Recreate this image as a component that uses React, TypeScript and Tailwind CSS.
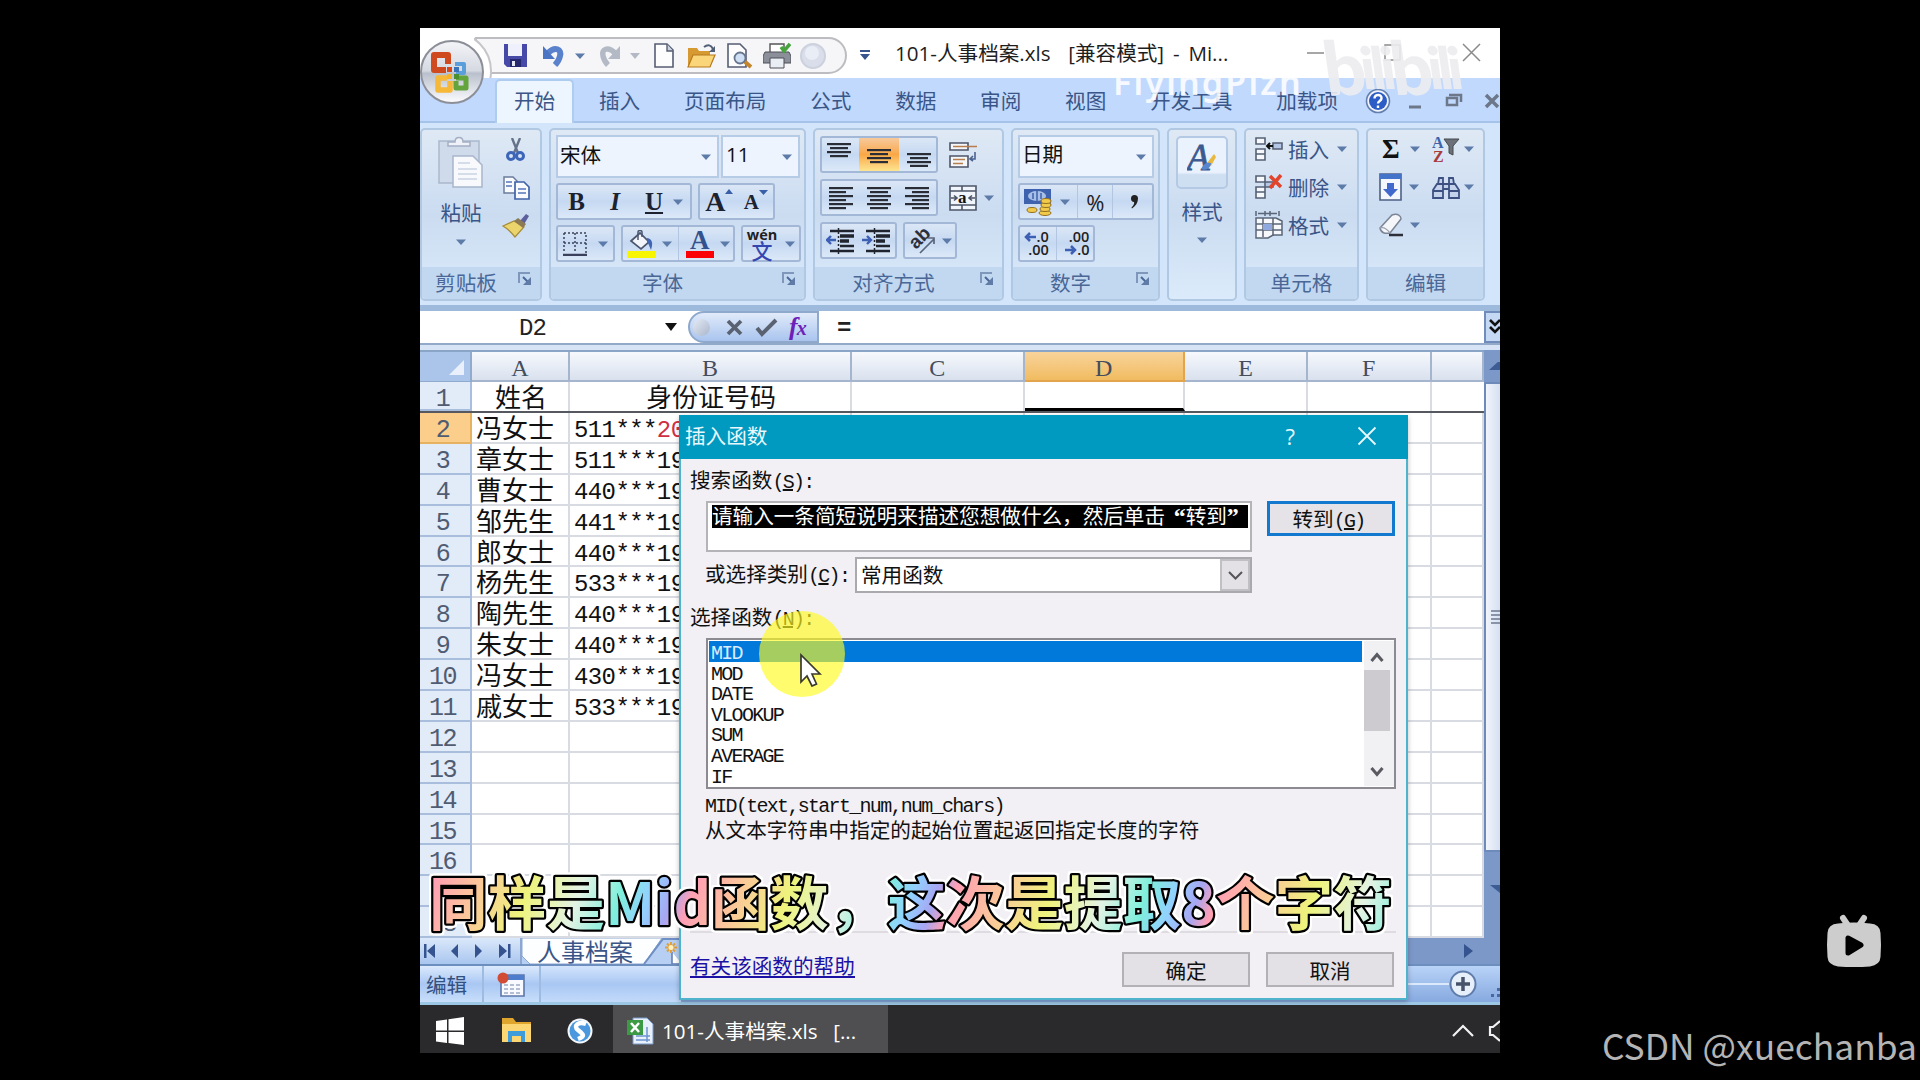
import type { ReactNode } from 'react';
import clsx from 'clsx';

const TABS = ['开始', '插入', '页面布局', '公式', '数据', '审阅', '视图', '开发工具', '加载项'];
const COLUMNS = ['A', 'B', 'C', 'D', 'E', 'F', ''];
const FUNCTIONS = ['MID', 'MOD', 'DATE', 'VLOOKUP', 'SUM', 'AVERAGE', 'IF'];

const PEOPLE = [
  { name: '冯女士', id: '511***', year: '20', red: true },
  { name: '章女士', id: '511***', year: '19' },
  { name: '曹女士', id: '440***', year: '19' },
  { name: '邹先生', id: '441***', year: '19' },
  { name: '郎女士', id: '440***', year: '19' },
  { name: '杨先生', id: '533***', year: '19' },
  { name: '陶先生', id: '440***', year: '19' },
  { name: '朱女士', id: '440***', year: '19' },
  { name: '冯女士', id: '430***', year: '19' },
  { name: '戚女士', id: '533***', year: '19' },
];

const GRID = 'grid grid-rows-[minmax(0,1fr)] grid-cols-[52px_98px_282px_172.5px_160.5px_123px_123.5px_52.5px]';
const BOX = 'flex items-center justify-around rounded-[3px] border-2 border-[#a3b8d6] bg-gradient-to-b from-[#dbe7f6] via-[#c6d9f2] to-[#dbe8f8]';

function Caret({ className }: { className?: string }) {
  return (
    <svg className={clsx('shrink-0', className)} width="10" height="6" viewBox="0 0 10 6">
      <path d="M0 0.5h10L5 6z" fill="#5d7ba8" />
    </svg>
  );
}

// Half-width latin text inside the dialog
function Mono({ children }: { children: ReactNode }) {
  return <span className="font-['Liberation_Mono',monospace] text-[20px] tracking-[-1.7px]">{children}</span>;
}

function Group({ label, launcher, className, children }: { label?: string; launcher?: boolean; className?: string; children: ReactNode }) {
  return (
    <div className={clsx('flex h-[173px] shrink-0 flex-col overflow-hidden rounded-[5px] border-2 border-[#b1c8e2] bg-gradient-to-b from-[#dfe9f5] via-[#cbdcf1] to-[#dbebfb]', className)}>
      <div className="h-[137px] shrink-0">{children}</div>
      {label && (
        <div className="flex flex-1 items-center bg-[#c2d8f1] pb-[1px] text-[20.6px] leading-none text-[#4a6796]">
          <span className={clsx('flex-1 text-center', launcher && 'pr-[8px]')}>{label}</span>
          {launcher && (
            <svg className="mr-2 -mt-2" width="14" height="14" viewBox="0 0 14 14" fill="none">
              <path d="M1 11V1h11" stroke="#7f97ba" strokeWidth="2" />
              <path d="M5 5l5 5" stroke="#4a6796" strokeWidth="2" />
              <path d="M13 5v8H5z" fill="#5f7ba6" />
            </svg>
          )}
        </div>
      )}
    </div>
  );
}

function OfficeButton() {
  return (
    <svg className="absolute left-0 top-[11px]" width="66" height="66" viewBox="0 0 66 66">
      <defs>
        <linearGradient id="orb" x1="0" y1="0" x2="0" y2="1">
          <stop offset="0" stopColor="#f4f5f8" />
          <stop offset="0.48" stopColor="#d5d9e1" />
          <stop offset="0.52" stopColor="#b9c0cd" />
          <stop offset="1" stopColor="#fdfdff" />
        </linearGradient>
      </defs>
      <circle cx="32" cy="33" r="31" fill="url(#orb)" stroke="#8c8f98" strokeWidth="2" />
      <g fill="none" strokeWidth="6" strokeLinejoin="round">
        <path d="M26 31H14V16h14v9" stroke="#cf4a1e" />
        <path d="M35 25h9v9h-8" stroke="#5a9fdb" strokeWidth="4" />
        <path d="M27 39H18v12h12v-9" stroke="#f5b838" strokeWidth="5.5" />
        <path d="M36 39h10v10H36v-7" stroke="#63a43c" strokeWidth="5" />
      </g>
      <path d="M27 28h5v5h-5z" fill="#d5491a" />
      <path d="M34 28h5v5h-5z" fill="#3b73b8" />
      <path d="M27 35h5v5h-5z" fill="#f4b426" />
      <path d="M34 35h5v5h-5z" fill="#4b8f30" />
    </svg>
  );
}

function TitleBar() {
  return (
    <div className="relative flex h-[50px] shrink-0 overflow-hidden bg-white">
      <div className="mt-[9px] ml-[55px] flex h-[37px] w-[372px] shrink-0 items-center rounded-r-full border-2 border-[#bdbdc1] bg-[#f6f6f8] pl-[26px]">
        <svg width="25" height="25" viewBox="0 0 25 25">
          <path d="M1 1h23v23H4l-3-3z" fill="#4649a8" />
          <path d="M5 1h14v12H5z" fill="#eef1fb" />
          <path d="M7 16h11v8H7z" fill="#25286f" />
          <path d="M9 18h3v5H9z" fill="#e6e8f5" />
        </svg>
        <svg className="ml-[15px]" width="22" height="24" viewBox="0 0 22 24" fill="none">
          <path d="M5 9C12 2 19 5 17 12c-1 5-3 7-5 9" stroke="#5a82cc" strokeWidth="6" />
          <path d="M0 2v13h12z" fill="#4b75c4" />
        </svg>
        <Caret className="ml-[10px]" />
        <svg className="ml-[13px]" width="22" height="24" viewBox="0 0 22 24" fill="none">
          <path d="M17 9C10 2 3 5 5 12c1 5 3 7 5 9" stroke="#b4bac5" strokeWidth="5.500" />
          <path d="M22 2v13H10z" fill="#b4bac5" />
        </svg>
        <svg className="ml-[10px] shrink-0" width="10" height="6"><path d="M0 0h10L5 6z" fill="#b4bac5" /></svg>
        <svg className="ml-[14px]" width="20" height="25" viewBox="0 0 20 25">
          <path d="M1 1h12l6 6v17H1z" fill="#fdfdfe" stroke="#555e73" strokeWidth="1.6" />
          <path d="M13 1v7h6" fill="#cdd3df" stroke="#555e73" strokeWidth="1.4" />
        </svg>
        <svg className="ml-[13px]" width="29" height="25" viewBox="0 0 29 25">
          <path d="M1 5h9l2 3h11v16H1z" fill="#d79a33" />
          <path d="M6 12h22l-5 12H1z" fill="#fbd579" stroke="#b67a1e" strokeWidth="1.2" />
          <path d="M17 4c4-3 7-2 9 2" fill="none" stroke="#535f76" strokeWidth="2" />
          <path d="M28 3v6h-6z" fill="#535f76" />
        </svg>
        <svg className="ml-[11px]" width="26" height="26" viewBox="0 0 26 26">
          <path d="M1 1h12l6 6v17H1z" fill="#fdfdfe" stroke="#555e73" strokeWidth="1.6" />
          <path d="M17 18l7 6" stroke="#c6862c" strokeWidth="4" />
          <circle cx="13" cy="15" r="5.5" fill="#cfe0f4" stroke="#68758f" strokeWidth="1.8" />
        </svg>
        <svg className="ml-[10px]" width="28" height="27" viewBox="0 0 28 27">
          <path d="M7 2h14v9H7z" fill="#fff" stroke="#555" strokeWidth="1.4" />
          <path d="M2 10h24l2 4v7H0v-7z" fill="#8b8f99" stroke="#4c4f57" />
          <path d="M7 16h14v10H7z" fill="#e9edf4" stroke="#4c4f57" />
          <path d="M18 5l3 4 6-7" fill="none" stroke="#46a53b" strokeWidth="3.5" />
        </svg>
        <svg className="ml-[9px]" width="26" height="26" viewBox="0 0 26 26">
          <circle cx="13" cy="13" r="12" fill="#d9deea" stroke="#ccd1dd" strokeWidth="2" />
          <circle cx="12" cy="10" r="7" fill="#e9edf5" />
        </svg>
      </div>
      <div className="absolute top-[3px] -left-[8px] size-[80px] rounded-full border-2 border-[#c6c6ca] bg-white" />
      <div className="absolute top-0 left-0 h-[50px] w-[54px] bg-white" />
      <svg className="mt-[21px] ml-[13px] shrink-0" width="10" height="12" viewBox="0 0 10 12">
        <path d="M0 1h10v2H0zM0 5h10L5 11z" fill="#38548f" />
      </svg>
      <div className="ml-[25px] flex h-[50px] items-center whitespace-pre font-['Open_Sans','Noto_Sans_CJK_SC',sans-serif] text-[20.6px] text-[#1e1e1e] [word-spacing:3.5px]">
        101-人事档案.xls  [兼容模式] - Mi...
      </div>
      <svg className="absolute top-[15px] right-[18px]" width="176" height="20" viewBox="0 0 176 20" fill="none" stroke="#8a8a8a" strokeWidth="1.5">
        <path d="M1 10h17M79 2h15v15H79zM157 1l17 17M174 1l-17 17" />
      </svg>
    </div>
  );
}

function TabStrip() {
  return (
    <div className="flex h-[45px] shrink-0 items-center border-b-2 border-[#a5c2e9] bg-[#c0d9fd] pt-[2px] pl-[94px] text-[20.6px] text-[#3a5587]">
      <div className="flex gap-[43.8px]">
        {TABS.map((tab, i) => (
          <span key={tab} className={clsx('whitespace-nowrap', i === 0 && 'relative -mx-[19px] -mt-[6px] -mb-[7px] rounded-t-[5px] border-2 border-b-0 border-[#aecbf0] bg-[#edf5fe] px-[17px] pt-[4px] pb-[8px]')}>{tab}</span>
        ))}
      </div>
      <svg className="ml-[27px] shrink-0" width="26" height="26" viewBox="0 0 26 26">
        <circle cx="13" cy="13" r="11.5" fill="#f0f4fc" stroke="#647fae" strokeWidth="1.6" />
        <circle cx="13" cy="13" r="9" fill="#2c5cc5" />
        <path d="M9.5 10.5c0-5 7.500-4.500 7 0c-.3 2.500-3.500 2.500-3.500 5M13 17.500v2.500" fill="none" stroke="#fff" strokeWidth="2.400" />
      </svg>
      <svg className="ml-[18px] shrink-0" width="92" height="18" viewBox="0 0 92 18" fill="none" stroke="#6c7789" strokeWidth="3">
        <path d="M0 15h12" />
        <path d="M38 6h10v7H38zM40 3h12v7" strokeWidth="2.500" />
        <path d="M77 3l12 12M89 3L77 15" strokeWidth="3.500" />
      </svg>
    </div>
  );
}

function Lines({ rows }: { rows: [number, number, number][] }) {
  return (
    <svg width="26" height="24" viewBox="0 0 26 24">
      {rows.map(([x, y, w]) => <rect key={y} x={x} y={y} width={w} height="2.2" fill="#2a2d36" />)}
    </svg>
  );
}

function ClipboardGroup() {
  return (
    <Group label="剪贴板" launcher className="w-[122px]">
      <div className="flex h-full">
        <div className="flex w-[78px] flex-col items-center pt-[6px]">
          <svg width="46" height="52" viewBox="0 0 46 52">
            <path d="M1 5h40v42H1z" fill="#cfdaea" stroke="#abb8cd" strokeWidth="1.5" />
            <path d="M10 10V6h7c0-6 8-6 8 0h7v4z" fill="#eef2f8" stroke="#a4afc3" strokeWidth="1.5" />
            <path d="M15 20h20l9 9v22H15z" fill="#f7f9fc" stroke="#a8b5cb" strokeWidth="1.5" />
            <path d="M20 27h12M20 33h19M20 38h19M20 43h19" stroke="#cbd4e4" strokeWidth="1.5" />
          </svg>
          <span className="mt-[14px] text-[20.6px] leading-none text-[#3a5587]">粘贴</span>
          <Caret className="mt-[16px]" />
        </div>
        <div className="flex flex-col items-center pt-[8px] pl-[2px]">
          <svg width="20" height="24" viewBox="0 0 20 24" fill="none">
            <path d="M6 0l6 15M14 0L8 15" stroke="#66728a" strokeWidth="2.400" />
            <circle cx="5" cy="18" r="3.500" stroke="#3d66b8" strokeWidth="3" />
            <circle cx="14" cy="18" r="3.500" stroke="#3d66b8" strokeWidth="3" />
          </svg>
          <svg className="mt-[14px]" width="27" height="24" viewBox="0 0 27 24">
            <path d="M1 1h9l4 4v12H1z" fill="#f8fafe" stroke="#6b7c9c" strokeWidth="1.5" />
            <path d="M12 6h9l5 5v12H12z" fill="#f8fafe" stroke="#3f62a8" strokeWidth="1.7" />
            <path d="M3 6h6M3 10h6M15 13h8M15 17h8" stroke="#5477bb" strokeWidth="1.5" />
          </svg>
          <svg className="mt-[13px]" width="28" height="25" viewBox="0 0 28 25">
            <path d="M17 9l7-8 3 2-6 10z" fill="#5c5f9c" />
            <path d="M1 13l11-5 10 6-9 10c-3-4-7-8-12-11z" fill="#ecd46c" stroke="#a68d3c" strokeWidth="1.3" />
            <path d="M12 8l4-3 8 6-3 4z" fill="#8c7a55" />
          </svg>
        </div>
      </div>
    </Group>
  );
}

function FontGroup() {
  return (
    <Group label="字体" launcher className="w-[257px]">
      <div className="flex flex-col pl-[5px] pt-[5px]">
        <div className="flex gap-[2px]">
          <div className="flex h-[43px] w-[163px] items-center justify-between border-2 border-[#b6cbe6] bg-[#edf4fd] pr-[6px] pb-[4px] pl-[2px] text-[20.6px] text-[#111]">
            宋体<Caret className="mt-[4px]" />
          </div>
          <div className="flex h-[43px] w-[79px] items-center justify-between border-2 border-[#b6cbe6] bg-[#edf4fd] pr-[6px] pb-[4px] pl-[3px] font-['Open_Sans',sans-serif] text-[20.6px] text-[#111]">
            11<Caret className="mt-[4px]" />
          </div>
        </div>
        <div className="mt-[5px] flex gap-[6px] font-['Liberation_Serif',serif] font-bold text-[#1c2230]">
          <div className={clsx(BOX, 'h-[37px] w-[136px] text-[25px] leading-[30px]')}>
            <div className="grid grid-cols-[37px_40px_38px_17px] items-center text-center">
              <span>B</span><span className="italic">I</span><span className="underline underline-offset-2">U</span><Caret />
            </div>
          </div>
          <div className={clsx(BOX, 'h-[37px] w-[77px]')}>
            <span className="flex text-[28px] leading-[32px]">A<svg className="mt-[3px]" width="8" height="5"><path d="M0 5h8L4 0z" fill="#3a5fa8" /></svg></span>
            <span className="flex items-start text-[21px] leading-[32px]">A<svg className="mt-[4px]" width="9" height="5"><path d="M0 0h9L4.500 5z" fill="#3a5fa8" /></svg></span>
          </div>
        </div>
        <div className="mt-[5px] flex gap-[6px]">
          <div className={clsx(BOX, 'h-[37px] w-[59px]')}>
            <svg width="24" height="24" viewBox="0 0 24 24" fill="none" stroke="#39425a">
              <path d="M1 1h22v20M1 1v20M12 1v20M1 11h22" strokeWidth="1.5" strokeDasharray="2 2" />
              <path d="M0 23h24" strokeWidth="2.500" />
            </svg>
            <Caret />
          </div>
          <div className={clsx(BOX, 'h-[37px] w-[114px]')}>
            <svg width="30" height="28" viewBox="0 0 30 28">
              <path d="M5 11l9-8 9 9-8 7z" fill="#f2f5fa" stroke="#4b5670" strokeWidth="1.7" />
              <path d="M12 10V2c0-2 4-2 4 0v5" fill="none" stroke="#4b5670" strokeWidth="1.5" />
              <path d="M21 8c6 1 6 6 4 12-2-4-2-6-4-8z" fill="#4166b6" />
              <path d="M1 21h29v7H1z" fill="#f8f500" />
            </svg>
            <Caret />
            <span className="h-full w-px bg-[#b2c6e2]" />
            <span className="flex flex-col items-center font-['Liberation_Serif',serif] text-[27px] leading-[21px] font-bold text-[#34528e]">A<i className="h-[7px] w-[28px] bg-[#fb0007]" /></span>
            <Caret />
          </div>
          <div className={clsx(BOX, 'h-[37px] w-[60px]')}>
            <span className="flex flex-col items-center">
              <span className="font-['Open_Sans',sans-serif] text-[14.5px] leading-[13px] font-bold text-[#222]">wén</span>
              <span className="text-[21px] leading-[19px] font-medium text-[#3546b0]">文</span>
            </span>
            <Caret />
          </div>
        </div>
      </div>
    </Group>
  );
}

function AlignGroup() {
  return (
    <Group label="对齐方式" launcher className="w-[191px]">
      <div className="flex flex-col gap-[6px] pl-[5px] pt-[6px]">
        <div className="flex items-center gap-[11px]">
          <div className={clsx(BOX, 'h-[37px] w-[118px]')}>
            <Lines rows={[[1, 0, 24], [4, 4, 18], [1, 8, 24], [4, 12, 18]]} />
            <div className="flex h-full w-[40px] items-center justify-center bg-gradient-to-b from-[#f7c99a] via-[#f9a845] to-[#fde590]">
              <Lines rows={[[1, 6, 24], [4, 10, 18], [1, 14, 24], [4, 18, 18]]} />
            </div>
            <Lines rows={[[1, 10, 24], [4, 14, 18], [1, 18, 24], [4, 21.8, 18]]} />
          </div>
          <svg width="28" height="28" viewBox="0 0 28 28" fill="none" stroke="#4c5568" strokeWidth="1.6">
            <path d="M1 2h18v7H1zM1 15h18v11H1z" fill="#f5f7fb" />
            <path d="M4 5.500h24M4 18.500h12M4 22.500h10" stroke="#b77d4c" />
            <path d="M26 11v7h-4M24 15l-3 3 3 2" stroke="#4a6390" />
          </svg>
        </div>
        <div className="flex items-center gap-[11px]">
          <div className={clsx(BOX, 'h-[37px] w-[118px]')}>
            <Lines rows={[[1, 1, 24], [1, 5, 17], [1, 9, 24], [1, 13, 17], [1, 17, 24], [1, 21, 17]]} />
            <Lines rows={[[1, 1, 24], [4, 5, 18], [1, 9, 24], [4, 13, 18], [1, 17, 24], [4, 21, 18]]} />
            <Lines rows={[[1, 1, 24], [8, 5, 17], [1, 9, 24], [8, 13, 17], [1, 17, 24], [8, 21, 17]]} />
          </div>
          <svg width="28" height="26" viewBox="0 0 28 26" fill="none" stroke="#4c5568" strokeWidth="1.6">
            <path d="M1 1h26v24H1zM1 6h26M1 20h26M13 1v5M13 20v5" fill="#f0f4fb" />
            <path d="M2 13h5M21 13h5M5 10.500L8 13l-3 2.500M23 10.500L20 13l3 2.500" />
            <text x="9" y="18" fontSize="17" fontWeight="700" fill="#111" stroke="none" fontFamily="Liberation Serif">a</text>
          </svg>
          <Caret className="-ml-[4px]" />
        </div>
        <div className="flex gap-[6px]">
          <div className={clsx(BOX, 'h-[37px] w-[77px]')}>
            {[false, true].map(right => (
              <svg key={String(right)} width="29" height="26" viewBox="0 0 29 26" stroke="#20242e" strokeWidth="2.400">
                <path d="M4 3h24M4 23h24M14 18h14" />
                <path d="M14 8h14M14 13h9" strokeWidth="3.500" />
                <path d="M12.500 0v26" strokeDasharray="2 2" strokeWidth="1.5" />
                <path d={right ? 'M0 12h8M5 8l4 4-4 4' : 'M10 12H2M5 8l-4 4 4 4'} stroke="#3d5fb4" fill="none" />
              </svg>
            ))}
          </div>
          <div className={clsx(BOX, 'h-[37px] w-[54px]')}>
            <svg width="28" height="28" viewBox="0 0 28 28">
              <text transform="translate(8 23) rotate(-45)" fontSize="19" fontWeight="700" fill="#2c303c" fontFamily="Liberation Sans">ab</text>
              <path d="M12 26L26 12M20 11h6v6" fill="none" stroke="#5a647a" strokeWidth="1.700" />
            </svg>
            <Caret />
          </div>
        </div>
      </div>
    </Group>
  );
}

function NumberGroup() {
  return (
    <Group label="数字" launcher className="w-[149px]">
      <div className="flex flex-col pl-[5px] pt-[5px]">
        <div className="flex h-[43px] w-[136px] items-center justify-between border-2 border-[#b6cbe6] bg-[#edf4fd] pr-[6px] pb-[6px] pl-[2px] text-[20.6px] text-[#111]">
          日期<Caret className="mt-[6px]" />
        </div>
        <div className={clsx(BOX, 'mt-[5px] h-[37px] w-[136px]')}>
          <svg width="28" height="28" viewBox="0 0 28 28">
            <path d="M0 1h27v15H0z" fill="#3e62ad" />
            <ellipse cx="13" cy="8" rx="9" ry="5" fill="#a9c0e6" />
            <path d="M13 3v10M9 5v6M17 5v6" stroke="#3e62ad" strokeWidth="1.500" />
            <g fill="#f1c94b" stroke="#94701f" strokeWidth="1">
              <ellipse cx="21" cy="25" rx="6" ry="2.500" /><ellipse cx="21" cy="21" rx="5" ry="2.500" /><ellipse cx="22" cy="17" rx="5" ry="2.500" /><ellipse cx="22" cy="13" rx="5" ry="2.500" /><ellipse cx="8" cy="22" rx="5" ry="2.500" />
            </g>
          </svg>
          <Caret />
          <span className="h-full w-px bg-[#b2c6e2]" />
          <span className="font-['Open_Sans',sans-serif] text-[22px] leading-[30px] text-[#222]">%</span>
          <span className="h-full w-px bg-[#b2c6e2]" />
          <svg className="mx-[9px]" width="9" height="14" viewBox="0 0 9 14"><path d="M1 3.500a3.500 3.500 0 1 1 7 0c0 4-2 7-6 10l-.5-1C4 10 4.500 8 4 7 2 7 1 5.500 1 3.500z" fill="#222" /></svg>
        </div>
        <div className={clsx(BOX, "mt-[5px] h-[37px] w-[77px] font-['Open_Sans',sans-serif] text-[14.5px] font-semibold text-[#222]")}>
          <span className="flex flex-col items-end leading-[12.500px]">
            <span className="flex items-center"><svg width="13" height="10" viewBox="0 0 13 10" fill="none" stroke="#3d5fb4" strokeWidth="2.500"><path d="M12 5H2M6 1L2 5l4 4" /></svg>.0</span>
            <span>.00</span>
          </span>
          <span className="h-full w-px bg-[#b2c6e2]" />
          <span className="flex flex-col items-end leading-[12.500px]">
            <span>.00</span>
            <span className="flex items-center"><svg width="13" height="10" viewBox="0 0 13 10" fill="none" stroke="#3d5fb4" strokeWidth="2.500"><path d="M1 5h10M7 1l4 4-4 4" /></svg>.0</span>
          </span>
        </div>
      </div>
    </Group>
  );
}

function StyleGroup() {
  return (
    <Group className="w-[70px]">
      <div className="flex flex-col items-center pt-[6px]">
        <div className="flex h-[53px] w-[52px] items-start justify-center rounded-[5px] border-2 border-[#b4c9e4] bg-gradient-to-b from-[#eaf2fd] from-70% to-[#cfdff2] to-75% pt-[5px]">
          <svg width="30" height="30" viewBox="0 0 30 30">
            <text x="0" y="27" fontSize="37" fontWeight="400" fontStyle="italic" fill="#3c5990" stroke="#3c5990" strokeWidth="0.8" fontFamily="Liberation Serif">A</text>
            <path d="M20 20l7-9 2 3-5 9z" fill="#e9b93f" />
            <path d="M14 26c3-6 6-7 10-6 0 5-5 8-10 6z" fill="#5a86d0" />
          </svg>
        </div>
        <span className="mt-[12px] text-[20.6px] leading-none text-[#3a5587]">样式</span>
        <Caret className="mt-[15px]" />
      </div>
    </Group>
  );
}

function CellIcon({ kind }: { kind: string }) {
  if (kind === '格式') {
    return (
      <svg width="28" height="28" viewBox="0 0 28 28" fill="none" stroke="#5a6578" strokeWidth="1.500">
        <path d="M1 0v5M24 0v5M3 2.500h19M10 0v5M15 0v5" />
        <path d="M1 7h20l6 3v14h-9l-5 3H1z" fill="#f6f8fc" />
        <path d="M1 13h26M1 19h26M8 7v19M18 7v18" />
        <path d="M8 13h9v6H8z" fill="#8fa8e0" stroke="none" />
      </svg>
    );
  }
  return (
    <svg width="28" height="26" viewBox="0 0 28 26" fill="none" stroke="#566074" strokeWidth="1.600">
      <path d="M1 2h9v6H1zM1 13h9v5H1zM1 18h9v6H1z" fill="#f6f8fc" />
      {kind === '插入'
        ? <><path d="M18 7h9v6h-9z" fill="#b4c7e6" /><path d="M12 10h6M15 7l-3 3 3 3" stroke="#111" strokeWidth="2" /></>
        : <><path d="M10 8h8v5h-8z" fill="#b4c7e6" /><path d="M15 2l11 11M26 1L15 14" stroke="#e2442c" strokeWidth="3.500" /></>}
    </svg>
  );
}

function CellsGroup() {
  return (
    <Group label="单元格" className="w-[115px]">
      <div className="flex flex-col gap-[10px] pt-[5px] pl-[9px]">
        {['插入', '删除', '格式'].map(item => (
          <div key={item} className="flex h-[28px] items-center text-[20.6px] text-[#3a5587]">
            <CellIcon kind={item} />
            <span className="ml-[5px]">{item}</span>
            <Caret className="ml-[8px]" />
          </div>
        ))}
      </div>
    </Group>
  );
}

function EditGroup() {
  return (
    <Group label="编辑" className="w-[119px]">
      <div className="grid grid-cols-[53px_1fr] gap-y-[10px] pt-[5px] pl-[11px]">
        <div className="flex h-[28px] items-center justify-between pr-[12px] pl-[3px]">
          <span className="font-['Liberation_Serif',serif] text-[27px] leading-[28px] font-bold text-[#111]">Σ</span><Caret />
        </div>
        <div className="flex h-[28px] items-center gap-[4px]">
          <svg width="28" height="28" viewBox="0 0 28 28">
            <text x="0" y="13" fontSize="16" fontWeight="700" fill="#3f62a8" fontFamily="Liberation Serif">A</text>
            <text x="1" y="27" fontSize="16" fontWeight="700" fill="#a83b3b" fontFamily="Liberation Serif">Z</text>
            <path d="M12 4h15l-6 7v9l-4-2v-7z" fill="#6c7078" stroke="#45484f" />
          </svg>
          <Caret />
        </div>
        <div className="flex h-[28px] items-center gap-[7px]">
          <svg width="23" height="28" viewBox="0 0 23 28">
            <path d="M1 1h21v26H1z" fill="#f4f7fd" stroke="#4c6086" strokeWidth="1.600" />
            <path d="M1 1h21v5H1z" fill="#4474ca" />
            <path d="M8 10h7v6h4l-7.500 8L4 16h4z" fill="#4068cd" />
          </svg>
          <Caret />
        </div>
        <div className="flex h-[28px] items-center gap-[4px]">
          <svg width="28" height="24" viewBox="0 0 28 24" fill="#c4d3eb" stroke="#3c5182" strokeWidth="1.800">
            <path d="M5 9h6v14H1v-8zM23 9h-6v14h10v-8zM7 3h4v6H6zM17 3h4l1 6h-5zM11 9h6v5h-6zM1 16h10M17 16h10" />
          </svg>
          <Caret />
        </div>
        <div className="flex h-[28px] items-center gap-[6px]">
          <svg width="25" height="24" viewBox="0 0 25 24">
            <path d="M1 15L13 2c6-2 9 1 9 4L11 20c-5 1-9 0-10-5z" fill="#f5f6fa" stroke="#7c8596" strokeWidth="1.500" />
            <path d="M1 15c3-1 7 1 10 5" fill="none" stroke="#9aa3b4" strokeWidth="1.400" />
            <path d="M10 22h14" stroke="#2c2f38" strokeWidth="2.500" />
          </svg>
          <Caret />
        </div>
      </div>
    </Group>
  );
}

function FormulaBar() {
  return (
    <div className="flex h-[32px] shrink-0 items-stretch bg-white">
      <div className="flex w-[268px] items-center">
        <span className="ml-[99px] pt-[4px] font-['Liberation_Mono',monospace] text-[24px] tracking-[-0.8px] text-[#222]">D2</span>
        <svg className="ml-auto mr-[11px]" width="12" height="8"><path d="M0 0h12L6 8z" fill="#111" /></svg>
      </div>
      <div className="flex w-[131px] items-center rounded-l-full border-2 border-[#8fa9cc] bg-gradient-to-b from-[#e1ebfa] to-[#a9c4ee] pl-[3px]">
        <span className="size-[17px] rounded-full bg-gradient-to-br from-[#e5ebf5] to-[#aab6cb]" />
        <svg className="ml-[16px]" width="17" height="17" viewBox="0 0 17 17"><path d="M2 2l13 13M15 2L2 15" stroke="#5a6272" strokeWidth="3.800" /></svg>
        <svg className="ml-[12px]" width="23" height="19" viewBox="0 0 23 19"><path d="M2 10l5 6L21 2" fill="none" stroke="#5a6272" strokeWidth="4" /></svg>
        <span className="ml-[11px] font-['Liberation_Serif',serif] text-[26px] leading-none font-bold italic text-[#6d1fb8]">f<span className="-ml-[1px] text-[20px]">x</span></span>
      </div>
      <div className="flex flex-1 items-center pl-[18px]">
        <span className="pt-[3px] font-['Liberation_Mono',monospace] text-[24px] font-bold text-[#222]">=</span>
      </div>
      <div className="flex w-[16px] items-center justify-end border-2 border-r-0 border-[#6f8cba] bg-[#c6d9f4]">
        <svg width="11" height="16" viewBox="0 0 11 16" fill="none" stroke="#111" strokeWidth="2.600"><path d="M1 1l5 5 5-5M1 8l5 5 5-5" /></svg>
      </div>
    </div>
  );
}

function RowHead({ n }: { n: number }) {
  return (
    <div className={clsx('border-r-2 border-b-2 pr-[5px] text-center text-[25px] tracking-[-1.5px] text-[#505c72]',
      n === 2 ? 'border-[#e7b162] bg-[#fbce8b]' : 'border-[#a9bedd] bg-[#e2ebf8]')}>{n}</div>
  );
}

function Sheet() {
  const rows = Array.from({ length: 17 }, (_, i) => i + 2);
  return (
    <div className="flex h-[588px] shrink-0">
      <div className="w-[1064px] overflow-hidden bg-white font-['Liberation_Mono','Noto_Sans_CJK_SC',monospace]">
        <div className={clsx(GRID, 'h-[32px] border-t-2 border-[#8ba5c6] text-[24px] text-[#444d5c]')}>
          <div className="flex items-end justify-end border-r-2 border-b border-[#91abcf] bg-[#abc4ea] pr-[6px] pb-[6px]">
            <svg width="15" height="15"><path d="M15 0v15H0z" fill="#e9f0fb" /></svg>
          </div>
          {COLUMNS.map((col, i) => (
            <div key={i} className={clsx("overflow-hidden border-r-2 border-b-2 text-center font-['Liberation_Serif',serif] leading-[33px]",
              col === 'D' ? 'border-[#e2a44d] bg-gradient-to-b from-[#f8d39a] to-[#f1bc5f]' : 'border-[#a4b5cd] bg-gradient-to-b from-[#f6f9fd] to-[#d9e1ee]')}>{col}</div>
          ))}
        </div>
        <div className={clsx(GRID, 'h-[31px] border-b-2 border-[#55585e] text-[26px] leading-[36px] text-[#111]')}>
          <RowHead n={1} />
          <div className="border-r-2 border-[#d9dbe3] pl-[2px] text-center">姓名</div>
          <div className="border-r-2 border-[#d9dbe3] pl-[2px] text-center">身份证号码</div>
          <div className="border-r-2 border-[#d9dbe3]" />
          <div className="border-r-2 border-b-3 border-r-[#d9dbe3] border-b-black" />
          <div className="border-r-2 border-[#d9dbe3]" />
          <div className="border-r-2 border-[#d9dbe3]" />
          <div />
        </div>
        {rows.map(n => {
          const p = PEOPLE[n - 2];
          return (
            <div key={n} className={clsx(GRID, 'h-[30.9px] text-[26px] leading-[36px] text-[#111] [&>div:not(:first-child)]:border-r-2 [&>div:not(:first-child)]:border-b-2 [&>div:not(:first-child)]:border-[#d9dbe3]')}>
              <RowHead n={n} />
              <div className="pl-[4px] whitespace-nowrap">{p?.name}</div>
              <div className="pl-[4px] text-[24px] tracking-[-0.6px] whitespace-nowrap">
                {p?.id}<span className={p?.red ? 'text-[#cf2f45]' : ''}>{p?.year}</span>
              </div>
              <div /><div /><div /><div /><div />
            </div>
          );
        })}
      </div>
      <div className="flex w-[16px] flex-col bg-[#7c98c8]">
        <div className="flex h-[32px] items-center justify-end">
          <svg width="11" height="8"><path d="M0 8L11 -2V8z" fill="#3e5c94" /></svg>
        </div>
        <div className="flex h-[470px] items-center justify-end rounded-l-[2px] border-2 border-r-0 border-[#6e8abb] bg-gradient-to-r from-[#f1f5fb] to-[#d5e0f1]">
          <svg width="9" height="14" stroke="#6c7890" strokeWidth="1.500"><path d="M0 1h9M0 5h9M0 9h9M0 13h9" /></svg>
        </div>
        <div className="flex flex-1 items-center justify-end pb-[12px]">
          <svg width="10" height="9"><path d="M0 0h10v8z" fill="#3e5c94" /></svg>
        </div>
      </div>
    </div>
  );
}

function SheetTabs() {
  return (
    <div className="flex h-[28px] shrink-0 items-stretch border-b-2 border-[#6c8fc0] bg-[#7c98c8]">
      <div className="flex w-[102px] items-center border-r-2 border-[#8ba7d2] bg-gradient-to-b from-[#dbe8fa] to-[#a9c6ef] pl-[3px]">
        <svg width="91" height="14" viewBox="0 0 91 14" fill="#35548f">
          <path d="M1 0h2.500v14H1zM12 0v14L4 7zM35 0v14l-7-7zM52 0v14l7-7zM76 0v14l8-7zM85 0h2.500v14H85z" />
        </svg>
      </div>
      <svg width="170" height="26" viewBox="0 0 170 26">
        <path d="M0 0h170v26H0z" fill="#b6cff2" />
        <path d="M0 0h140L122 26H8L0 18z" fill="#fdfeff" stroke="#8ba7d2" />
        <text x="15" y="23" fontSize="24" fill="#3a5587" fontFamily="Noto Sans CJK SC">人事档案</text>
        <path d="M122 26L141 1h29" fill="none" stroke="#6f8fc4" strokeWidth="2" />
        <path d="M150 14v12h10" fill="#fff" stroke="#5d7ab0" strokeWidth="1.500" />
        <path d="M149 4v11M143 9.500h12M145 5.500l8 8M153 5.500l-8 8" stroke="#e0a03a" strokeWidth="2" />
        <circle cx="149" cy="9.500" r="2.500" fill="#fff2c0" />
      </svg>
      <div className="flex flex-1 items-center justify-end pr-[27px]">
        <svg width="9" height="14"><path d="M0 0v14l9-7z" fill="#35548f" /></svg>
      </div>
    </div>
  );
}

function StatusBar() {
  return (
    <div className="flex h-[39px] shrink-0 items-center border-b-3 border-[#9cc8e6] bg-gradient-to-b from-[#dceafd] via-[#a9c7f3] to-[#c9dffb] text-[#34507f]">
      <span className="w-[62px] pl-[6px] text-[20.6px]">编辑</span>
      <span className="h-full w-[2px] bg-[#9ebbe2]" />
      <svg className="ml-[13px]" width="28" height="25" viewBox="0 0 28 25">
        <path d="M4 3h23v21H4z" fill="#f8faff" stroke="#5d77a8" strokeWidth="1.600" />
        <path d="M4 3h23v5H4z" fill="#4d7dcc" />
        <path d="M7 13h18M7 17h18M7 21h18" stroke="#9daac4" strokeWidth="1.500" strokeDasharray="4 2" />
        <circle cx="6" cy="6" r="5.500" fill="#d14b35" />
      </svg>
      <span className="ml-[14px] h-full w-[2px] bg-[#9ebbe2]" />
      <div className="flex h-full w-[140px] bg-gradient-to-b from-[#d3e4fc] via-[#a9c7f3] to-[#c3dafa]" />
      <div className="flex h-full flex-1 items-center justify-end bg-gradient-to-b from-[#b9d3f8] to-[#86a9df]">
        <span className="h-[2px] w-[60px] bg-[#dce9fb]" />
        <svg width="28" height="28" viewBox="0 0 28 28">
          <circle cx="14" cy="14" r="12.500" fill="#e7effa" stroke="#5f7cab" strokeWidth="2" />
          <path d="M14 7v14M7 14h14" stroke="#47536b" strokeWidth="3.500" />
        </svg>
        <svg className="ml-[14px] mt-[16px]" width="9" height="12" fill="#4668a4"><path d="M0 8h3v3H0zM6 8h3v3H6zM6 2h3v3H6z" /></svg>
      </div>
    </div>
  );
}

function Taskbar() {
  return (
    <div className="flex h-[48px] shrink-0 items-center bg-[#2a2a2c] pt-[3px] text-white">
      <svg className="ml-[16px]" width="28" height="28" viewBox="0 0 28 28" fill="#fff">
        <path d="M0 4l11-1.600V13.500H0zM12.500 2.200L28 0v13.500H12.500zM0 15h11v11L0 24.500zM12.500 15H28v13l-15.500-2z" />
      </svg>
      <svg className="ml-[38px]" width="29" height="25" viewBox="0 0 29 25">
        <path d="M0 0h11l3 4h15v20H0z" fill="#e0a52c" />
        <path d="M0 6h29v18H0z" fill="#fbd672" />
        <path d="M6 13h17v11h-4v-6h-9v6H6z" fill="#3e9cdb" />
      </svg>
      <svg className="ml-[36px]" width="26" height="26" viewBox="0 0 26 26">
        <circle cx="13" cy="13" r="12.500" fill="#f4f8fc" />
        <circle cx="13" cy="13" r="10.500" fill="#4b98df" />
        <path d="M19 6C11 3 6 8 11 12s8 6 0 9" fill="none" stroke="#fff" strokeWidth="4.500" />
      </svg>
      <div className="-mt-[3px] ml-[20px] flex h-[48px] w-[275px] items-center bg-[#4f4f51] pt-[3px] pl-[14px]">
        <svg className="shrink-0" width="27" height="28" viewBox="0 0 27 28">
          <path d="M6 1h14l6 6v20H6z" fill="#e8f0fb" stroke="#7a9bc8" />
          <path d="M9 19h14M9 23h14M20 10v15" stroke="#6c94ce" strokeWidth="1.500" />
          <path d="M0 3h16v15H0z" fill="#3d9a44" />
          <path d="M4 6l8 9M12 6l-8 9" stroke="#fff" strokeWidth="2.500" />
        </svg>
        <span className="ml-[8px] whitespace-pre pt-[1px] font-['Open_Sans','Noto_Sans_CJK_SC',sans-serif] text-[20.6px] [word-spacing:2.500px]">101-人事档案.xls  [...</span>
      </div>
      <svg className="ml-auto" width="48" height="24" viewBox="0 0 48 24" fill="none" stroke="#f2f2f2" strokeWidth="2.200">
        <path d="M1 17L11 7l10 10" />
        <path d="M48 2l-7 6h-3v8h3l7 6" />
      </svg>
    </div>
  );
}

function FunctionDialog() {
  return (
    <div className="absolute top-[387px] left-[259px] flex h-[585px] w-[729px] flex-col border-2 border-t-0 border-[#4fb4cb] bg-[#f2f0f4] text-[20.6px] text-[#111] shadow-[0_2px_5px_rgba(0,0,0,0.25)]">
      <div className="-mx-[2px] flex h-[44px] shrink-0 items-center bg-[#0099c0] pb-[2px] pl-[6px] text-[#e8f8fc]">
        <span className="-mt-[2px]">插入函数</span>
        <span className="ml-auto font-['Open_Sans',sans-serif] text-[22px]">?</span>
        <svg className="mr-[31px] ml-[62px]" width="20" height="20" viewBox="0 0 20 20"><path d="M1.500 1.500l17 17M18.500 1.500l-17 17" stroke="#e8f8fc" strokeWidth="1.800" /></svg>
      </div>
      <div className="mt-[5px] h-[30px] pl-[9px] leading-[30px]">搜索函数<Mono>(<u>S</u>):</Mono></div>
      <div className="mt-[7px] flex gap-[15px] pl-[25px]">
        <div className="h-[51px] w-[546px] border-2 border-[#b4b3b7] bg-white pt-[2px] pl-[4px]">
          <div className="h-[23px] w-[536px] overflow-hidden bg-black leading-[21px] whitespace-nowrap text-white">请输入一条简短说明来描述您想做什么，然后单击<span className="inline-block w-[20.6px] text-right font-['Liberation_Serif',serif] text-[24px] font-bold">“</span>转到<span className="font-['Liberation_Serif',serif] text-[24px] font-bold">”</span></div>
        </div>
        <button className="h-[35px] w-[128px] border-3 border-[#1279cf] bg-[#e5e3e7] pr-[5px] leading-[29px]">转到<Mono>(<u>G</u>)</Mono></button>
      </div>
      <div className="mt-[5px] flex items-center pl-[24px]">
        <span className="w-[150px] whitespace-nowrap">或选择类别<Mono>(<u>C</u>):</Mono></span>
        <div className="flex h-[36px] w-[397px] items-center justify-between border-2 border-[#aaa9ad] bg-white pl-[4px]">
          <span className="-mt-[2px]">常用函数</span>
          <span className="flex h-full w-[30px] items-center justify-center border-2 border-[#c0bfc3] bg-[#e3e1e5]">
            <svg width="15" height="9" fill="none" stroke="#55545a" strokeWidth="2"><path d="M1 1l6.500 6.500L14 1" /></svg>
          </span>
        </div>
      </div>
      <div className="mt-[8px] h-[30px] pl-[9px] leading-[30px]">选择函数<Mono>(<u>N</u>):</Mono></div>
      <div className="mt-[7px] ml-[25px] flex h-[151px] w-[690px] shrink-0 border-2 border-[#8c8b91] bg-white py-[1px] pl-[1px]">
        <div className="flex-1">
          {FUNCTIONS.map((fn, i) => (
            <div key={fn} className={clsx('h-[20.6px] pl-[2px] leading-[18px]', i === 0 && 'bg-[#0079db] text-[#d8ecff]')}><Mono>{fn}</Mono></div>
          ))}
        </div>
        <div className="ml-[2px] flex w-[30px] flex-col items-center bg-[#f1f0f3] pr-[4px]">
          <svg className="mt-[10px]" width="14" height="12" fill="none" stroke="#5b5a60" strokeWidth="3"><path d="M1.500 10L7 3.500 12.500 10" /></svg>
          <span className="mt-[7px] h-[61px] w-[26px] bg-[#cdcbcf]" />
          <svg className="mt-auto mb-[8px]" width="14" height="12" fill="none" stroke="#5b5a60" strokeWidth="3"><path d="M1.500 2L7 8.500 12.500 2" /></svg>
        </div>
      </div>
      <div className="h-[26px] pl-[24px] leading-[28px]"><Mono>MID(text,start_num,num_chars)</Mono></div>
      <div className="mt-[2px] h-[26px] pl-[24px] leading-[25px]">从文本字符串中指定的起始位置起返回指定长度的字符</div>
      <div className="mt-auto mr-[10px] ml-[9px] border-b-2 border-[#dedce1]" />
      <div className="mt-[19px] mb-[11px] flex h-[35px] shrink-0 items-center pl-[9px]">
        <a className="-mt-[7px] border-b-2 border-[#1b12a5] leading-[21px] text-[#1b12a5]">有关该函数的帮助</a>
        <button className="ml-auto h-[35px] w-[128px] border-2 border-[#b3b1b6] bg-[#e3e1e5] leading-[33px]">确定</button>
        <button className="mr-[12px] ml-[16px] h-[35px] w-[128px] border-2 border-[#b3b1b6] bg-[#e3e1e5] leading-[33px]">取消</button>
      </div>
    </div>
  );
}

function Pointer() {
  return (
    <>
      <div className="absolute top-[583px] left-[339px] size-[86px] rounded-full bg-[#fffb1e]/65" />
      <svg className="absolute top-[625px] left-[380px]" width="22" height="34" viewBox="0 0 22 34">
        <path d="M1 2v27l6-6 5 10 4.500-2L12 21h8z" fill="#fff" stroke="#3a3a2c" strokeWidth="1.700" />
      </svg>
    </>
  );
}

function Caption() {
  return (
    <svg className="pointer-events-none absolute top-[832px] left-0 [filter:drop-shadow(2px_0_0_white)_drop-shadow(-2px_0_0_white)_drop-shadow(0_2px_0_white)_drop-shadow(0_-2px_0_white)]" width="1080" height="90" viewBox="0 0 1080 90">
      <defs>
        <linearGradient id="rainbow" gradientUnits="userSpaceOnUse" x1="14" y1="20" x2="248" y2="102" spreadMethod="repeat">
          <stop offset="0" stopColor="#ff9fb4" />
          <stop offset="0.17" stopColor="#fbc69a" />
          <stop offset="0.37" stopColor="#eef37c" />
          <stop offset="0.57" stopColor="#e3f3e4" />
          <stop offset="0.73" stopColor="#7fefdc" />
          <stop offset="0.84" stopColor="#92d0ff" />
          <stop offset="0.93" stopColor="#a7a6f2" />
          <stop offset="1" stopColor="#ff9fb4" />
        </linearGradient>
      </defs>
      <text x="9" y="65" fontSize="58.500" fontWeight="700" textLength="963" fontFamily="Noto Sans CJK SC" fill="url(#rainbow)" stroke="#000" strokeWidth="4.500" strokeLinejoin="round" paintOrder="stroke">同样是Mid函数，这次是提取8个字符</text>
    </svg>
  );
}

function Watermark() {
  return (
    <div className="absolute top-[3px] left-[693px] flex items-end whitespace-nowrap text-white/85">
      <span className="mb-[2px] w-[192px] font-['Noto_Sans',sans-serif] text-[34px] leading-[38px] font-semibold tracking-[2.200px]">FlyingPizh</span>
      <span className="ml-[18px] flex skew-x-[8deg] items-end font-['Lato',sans-serif] leading-[72px] font-black tracking-[-5px] text-[#ececf0]/90">
        <span className="text-[74px]">b</span><span className="text-[58px]">ili</span>
        <span className="text-[74px]">b</span><span className="text-[58px]">ili</span>
      </span>
    </div>
  );
}

export default function App() {
  return (
    <div className="relative h-[1080px] w-[1920px] overflow-hidden bg-black pt-[28px] pl-[420px] font-['Noto_Sans_CJK_SC',sans-serif]">
      <div className="relative flex h-[1025px] w-[1080px] flex-col overflow-hidden">
        <TitleBar />
        <TabStrip />
        <div className="flex h-[182px] shrink-0 gap-[7px] overflow-hidden bg-[#d3e5fb] pt-[5px]">
          <ClipboardGroup />
          <FontGroup />
          <AlignGroup />
          <NumberGroup />
          <StyleGroup />
          <CellsGroup />
          <EditGroup />
        </div>
        <div className="h-[6px] shrink-0 bg-[#9db9dc]" />
        <FormulaBar />
        <div className="h-[7px] shrink-0 border-t-2 border-[#93a9c9] bg-[#d6e4f6]" />
        <Sheet />
        <SheetTabs />
        <StatusBar />
        <Taskbar />
        <OfficeButton />
        <FunctionDialog />
        <Pointer />
        <Watermark />
        <Caption />
      </div>
      <svg className="absolute top-[914px] left-[1826px]" width="56" height="54" viewBox="0 0 56 54">
        <path d="M17 4l6 9M38 4l-6 9" stroke="#cdcdcd" strokeWidth="6" strokeLinecap="round" />
        <path d="M12 9.500q16-2 32 0Q54 10 54.500 19q1 12 0 24Q54 51 44 52.500q-16 1-32 0Q2 51 1.500 43q-1-12 0-24Q2 10 12 9.500z" fill="#cdcdcd" />
        <path d="M22 24v15l13-8z" fill="#000" stroke="#000" strokeWidth="5" strokeLinejoin="round" />
      </svg>
      <div className="absolute top-[1019px] left-[1602px] text-[35.400px] leading-[52px] whitespace-nowrap text-[#b4b4b4]">CSDN @xuechanba</div>
    </div>
  );
}
